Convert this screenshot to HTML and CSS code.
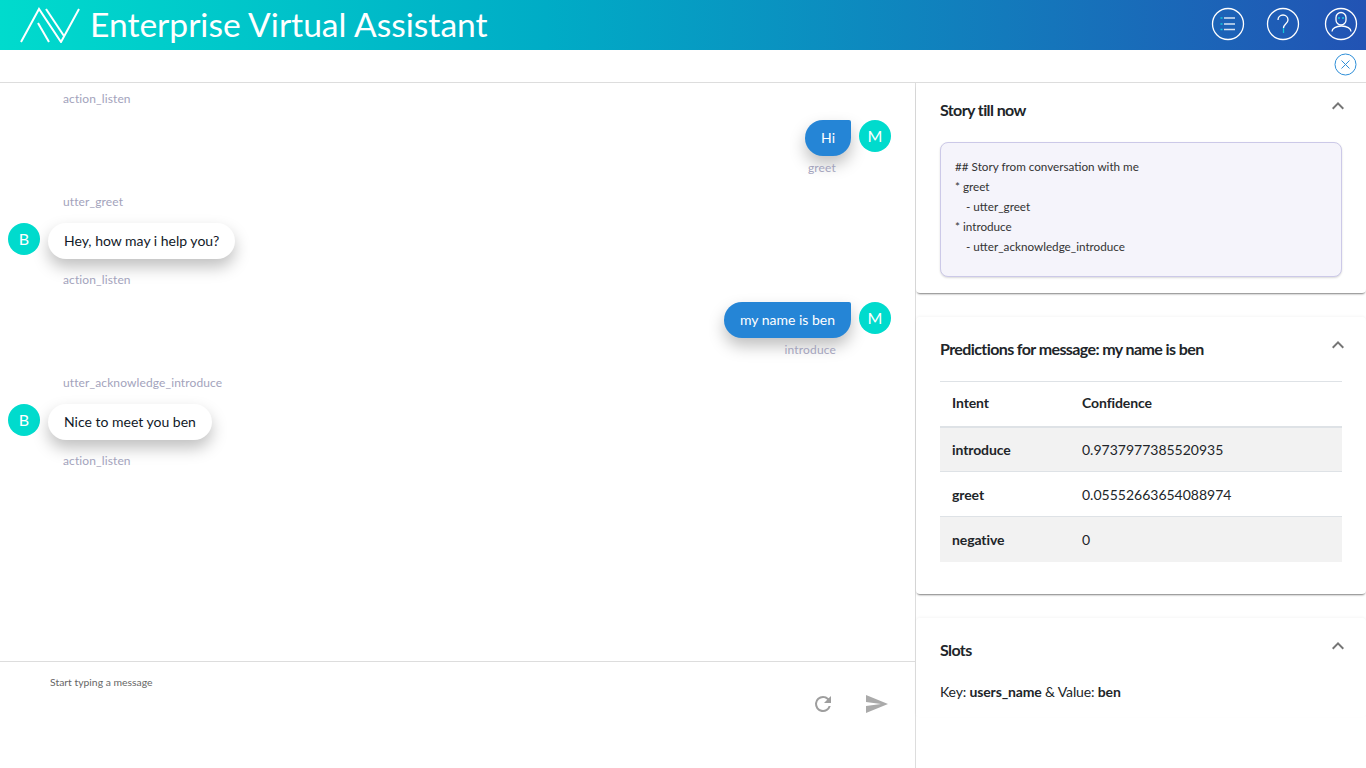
FILE: index.html
```html
<!DOCTYPE html>
<html lang="en">
<head>
  <meta charset="UTF-8">
  <title>Enterprise Virtual Assistant</title>
  <link rel="stylesheet" href="styles.css">
</head>
<body>

  <header class="topbar">
    <div class="brand">
      <svg class="logo" width="60" height="36" viewBox="0 0 60 36" fill="none" stroke="#fff" stroke-width="2">
        <path d="M1 35 L19 2 L41 35 L59 2"/>
        <path d="M18 16 L29 35"/>
        <path d="M26 2 L44 29"/>
      </svg>
      <h1>Enterprise Virtual Assistant</h1>
    </div>
    <div class="top-icons">
      <svg width="34" height="34" viewBox="0 0 34 34" fill="none" stroke="#fff">
        <circle cx="17" cy="17" r="15.5" stroke-width="1.3"/>
        <path d="M13 11h11M13 17h11M13 22.500h11" stroke="#d5e3f3" stroke-width="1.300"/>
        <path d="M9.500 11h2M9.500 17h2M9.500 22.500h2" stroke="#13c6dc" stroke-width="1.600"/>
      </svg>
      <svg width="34" height="34" viewBox="0 0 34 34" fill="none" stroke="#fff">
        <circle cx="17" cy="17" r="15.5" stroke-width="1.3"/>
        <path d="M12 13c0-3 2.200-5 5-5s5 2 5 5c0 3.500-4.500 4-4.500 8" stroke-width="1.3"/>
        <path d="M17.500 21v5" stroke="#13c6dc" stroke-width="1.300"/>
      </svg>
      <svg width="34" height="34" viewBox="0 0 34 34" fill="none" stroke="#fff">
        <circle cx="17" cy="17" r="15.500" stroke-width="1.300"/>
        <rect x="12" y="5.500" width="10" height="12.500" rx="5" stroke-width="1.300"/>
        <path d="M8 24.500c0-3 4-5.500 9.500-5.500s9.500 2.500 9.500 5.500" stroke-width="1.300"/>
        <path d="M14 11h2M18 11h2" stroke="#13c6dc" stroke-width="1.300"/>
      </svg>
    </div>
  </header>

  <div class="subbar">
    <svg class="close-icon" width="23" height="23" viewBox="0 0 23 23" fill="none" stroke="#2f8fd8">
      <circle cx="11.500" cy="11.500" r="10.500" stroke-width="1"/>
      <path d="M7.500 7.500l8 8M15.500 7.500l-8 8" stroke-width="1"/>
    </svg>
  </div>

  <main class="content">
    <section class="chat">
      <div class="messages">
        <div class="action">action_listen</div>

        <div class="msg-user">
          <div class="user-col">
            <div class="bubble-user">Hi</div>
            <div class="intent">greet</div>
          </div>
          <div class="avatar">M</div>
        </div>

        <div class="action action-bot">utter_greet</div>
        <div class="msg-bot">
          <div class="avatar">B</div>
          <div class="bubble-bot">Hey, how may i help you?</div>
        </div>
        <div class="action action-after">action_listen</div>

        <div class="msg-user msg-user-2">
          <div class="user-col">
            <div class="bubble-user">my name is ben</div>
            <div class="intent">introduce</div>
          </div>
          <div class="avatar">M</div>
        </div>

        <div class="action action-bot action-bot-2">utter_acknowledge_introduce</div>
        <div class="msg-bot">
          <div class="avatar">B</div>
          <div class="bubble-bot">Nice to meet you ben</div>
        </div>
        <div class="action action-after">action_listen</div>
      </div>

      <div class="composer">
        <div class="placeholder">Start typing a message</div>
        <div class="composer-icons">
          <svg width="24" height="24" viewBox="0 0 24 24" fill="#9e9e9e">
            <path d="M17.650 6.350A7.958 7.958 0 0 0 12 4a8 8 0 1 0 7.730 10h-2.080A6 6 0 1 1 12 6c1.660 0 3.140.690 4.220 1.780L13 11h7V4l-2.350 2.350z"/>
          </svg>
          <svg width="24" height="24" viewBox="0 0 24 24" fill="#aaa">
            <path d="M1 21l22-9L1 3v7l15 2-15 2z"/>
          </svg>
        </div>
      </div>
    </section>

    <aside class="side">
      <div class="panel panel-story">
        <div class="panel-head">
          <h2>Story till now</h2>
          <svg class="chevron" width="24" height="24" viewBox="0 0 24 24" fill="#757575"><path d="M12 8l-6 6 1.410 1.410L12 10.830l4.590 4.580L18 14z"/></svg>
        </div>
        <div class="story">
          <div>## Story from conversation with me</div>
          <div>* greet</div>
          <div class="indent">- utter_greet</div>
          <div>* introduce</div>
          <div class="indent">- utter_acknowledge_introduce</div>
        </div>
      </div>

      <div class="panel panel-pred">
        <div class="panel-head panel-head-low">
          <h2>Predictions for message: my name is ben</h2>
          <svg class="chevron" width="24" height="24" viewBox="0 0 24 24" fill="#757575"><path d="M12 8l-6 6 1.410 1.410L12 10.830l4.590 4.580L18 14z"/></svg>
        </div>
        <table class="pred-table">
          <thead>
            <tr><th>Intent</th><th>Confidence</th></tr>
          </thead>
          <tbody>
            <tr><td class="name">introduce</td><td>0.9737977385520935</td></tr>
            <tr><td class="name">greet</td><td>0.05552663654088974</td></tr>
            <tr><td class="name">negative</td><td>0</td></tr>
          </tbody>
        </table>
      </div>

      <div class="panel panel-slots">
        <div class="panel-head panel-head-low">
          <h2>Slots</h2>
          <svg class="chevron" width="24" height="24" viewBox="0 0 24 24" fill="#757575"><path d="M12 8l-6 6 1.410 1.410L12 10.830l4.590 4.580L18 14z"/></svg>
        </div>
        <p class="slot-line">Key: <b>users_name</b> &amp; Value: <b>ben</b></p>
      </div>
    </aside>
  </main>

</body>
</html>
```

FILE: styles.css
```css
* {
  box-sizing: border-box;
}
html, body {
  height: 100%;
}
body {
  margin: 0;
  height: 768px;
  overflow: hidden;
  font-family: Lato, sans-serif;
  color: #212529;
  background: #fff;
  display: flex;
  flex-direction: column;
}
.topbar {
  height: 50px;
  flex: none;
  display: flex;
  justify-content: space-between;
  align-items: center;
  padding: 0 8px 0 20px;
  background: linear-gradient(90deg, #00dbcd 0%, #00acc6 40%, #2253b4 100%);
}
.brand {
  display: flex;
  align-items: center;
  gap: 10px;
}
.logo {
  display: block;
}
.brand h1 {
  margin: 0;
  padding-bottom: 2px;
  font-size: 33.6px;
  font-weight: 400;
  color: #fff;
  line-height: 48px;
}
.top-icons {
  display: flex;
  gap: 21px;
  padding-bottom: 2px;
}
.top-icons svg {
  display: block;
}
.top-icons svg:last-child {
  margin-left: 3px;
}
.subbar {
  height: 33px;
  flex: none;
  display: flex;
  justify-content: flex-end;
  align-items: flex-start;
  padding: 3px 9px 0 0;
  border-bottom: 1px solid #ddd;
}
.content {
  flex: 1;
  display: flex;
  min-height: 0;
}

/* chat column */
.chat {
  width: 916px;
  flex: none;
  border-right: 1px solid #ddd;
  display: flex;
  flex-direction: column;
}
.messages {
  flex: 1;
  padding: 9px 24px 0 8px;
  font-size: 14px;
}
.action {
  padding-left: 55px;
  font-size: 12px;
  line-height: 14px;
  color: #a3a3bc;
  letter-spacing: 0.12px;
}
.action-bot {
  margin-top: 20px;
}
.action-bot-2 {
  margin-top: 19px;
}
.action-after {
  margin-top: 14px;
}
.msg-user {
  display: flex;
  justify-content: flex-end;
  gap: 8px;
  margin-top: 14px;
}
.msg-user-2 {
  margin-top: 15px;
}
.user-col {
  display: flex;
  flex-direction: column;
  align-items: flex-end;
}
.avatar {
  width: 32px;
  height: 32px;
  flex: none;
  border-radius: 50%;
  background: #00dbcd;
  color: #fff;
  font-size: 16px;
  line-height: 32px;
  text-align: center;
}
.bubble-user {
  height: 36px;
  padding: 0 16px;
  line-height: 36px;
  color: #fff;
  background: #2585d6;
  border-radius: 18px 2px 18px 18px;
  box-shadow: 0 8px 16px rgba(0, 0, 0, 0.25);
}
.intent {
  margin: 5px 15px 0 0;
  font-size: 12px;
  line-height: 14px;
  color: #a3a3bc;
  letter-spacing: 0.15px;
}
.msg-bot {
  display: flex;
  gap: 8px;
  margin-top: 14px;
}
.bubble-bot {
  height: 36px;
  padding: 0 16px;
  line-height: 36px;
  color: #111827;
  background: #fff;
  border-radius: 18px;
  box-shadow: 0 8px 16px rgba(0, 0, 0, 0.25);
}
.composer {
  height: 107px;
  flex: none;
  border-top: 1px solid #ddd;
  padding: 13px 26px 0 50px;
}
.placeholder {
  font-size: 10.4px;
  line-height: 14px;
  color: #666;
}
.composer-icons {
  display: flex;
  justify-content: flex-end;
  gap: 30px;
  margin-top: 3px;
}

/* right panels */
.side {
  flex: 1;
  min-width: 0;
}
.panel {
  background: #fff;
  padding: 0 24px;
  border-radius: 4px;
}
.panel-story {
  height: 210px;
  box-shadow: 0 2px 2px -1px rgba(0, 0, 0, 0.5);
}
.panel-pred {
  height: 277px;
  margin-top: 24px;
  box-shadow: 0 2px 2px -1px rgba(0, 0, 0, 0.5), 0 -1px 3px rgba(0, 0, 0, 0.04);
}
.panel-slots {
  height: 99px;
  margin-top: 24px;
  box-shadow: 0 -1px 3px rgba(0, 0, 0, 0.04);
}
.panel-head {
  display: flex;
  justify-content: space-between;
  align-items: flex-start;
  padding-top: 15px;
  height: 59px;
}
.panel-head-low {
  padding-top: 20px;
  height: 64px;
}
.panel-head h2 {
  margin: 0;
  font-size: 16px;
  font-weight: 700;
  line-height: 24px;
  letter-spacing: -0.6px;
}
.chevron {
  margin: -4px -8px 0 0;
}
.story {
  height: 135px;
  padding: 13px 14px;
  background: #f5f4fb;
  border: 1px solid #ccc9e8;
  border-radius: 8px;
  box-shadow: 0 1px 2px rgba(0, 0, 0, 0.15);
  font-size: 11.7px;
  line-height: 20px;
  color: #333;
}
.indent {
  padding-left: 11px;
}
.pred-table {
  width: 100%;
  border-collapse: collapse;
  font-size: 14px;
}
.pred-table th,
.pred-table td {
  height: 45px;
  padding: 0 12px;
  text-align: left;
  border-top: 1px solid #dee2e6;
}
.pred-table th {
  padding-bottom: 3px;
  font-weight: 700;
  letter-spacing: -0.1px;
}
.pred-table th:first-child,
.pred-table td:first-child {
  width: 130px;
}
.pred-table thead th {
  border-bottom: 2px solid #dee2e6;
}
.pred-table tbody tr:nth-child(odd) {
  background: #f2f2f2;
}
.pred-table .name {
  font-weight: 700;
  letter-spacing: -0.1px;
}
.slot-line {
  margin: 0;
  font-size: 14px;
  line-height: 20px;
  letter-spacing: -0.15px;
}
```
